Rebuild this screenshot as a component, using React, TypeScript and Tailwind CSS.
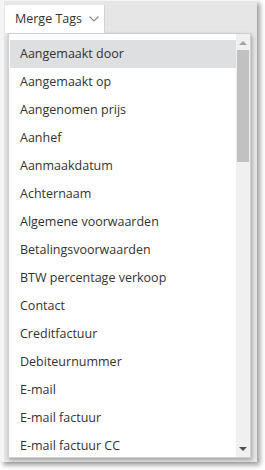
const TAGS = [
  'Aangemaakt door',
  'Aangemaakt op',
  'Aangenomen prijs',
  'Aanhef',
  'Aanmaakdatum',
  'Achternaam',
  'Algemene voorwaarden',
  'Betalingsvoorwaarden',
  'BTW percentage verkoop',
  'Contact',
  'Creditfactuur',
  'Debiteurnummer',
  'E-mail',
  'E-mail factuur',
  'E-mail factuur CC',
];

export default function App() {
  return (
    <div className="h-[470px] w-[265px] bg-white font-['Open_Sans','Noto_Sans',sans-serif] text-[12.5px] text-[#333]">
      <div className="h-[462px] w-[257px] border-l-4 border-t border-[#f4f4f4] bg-[#e6e6e6] shadow-[3px_3px_5px_rgba(0,0,0,0.4)]">
        {/* toolbar */}
        <div className="flex h-[32px] items-end">
          <div className="ml-[1px] flex h-[28px] w-[100px] items-center gap-[7px] border-r border-[#d4d4d4] bg-white pl-[10px]">
            <span>Merge Tags</span>
            <svg width="10" height="6" viewBox="0 0 10 6" fill="none" stroke="#888" strokeWidth="1.1">
              <path d="M0.5 0.5 L5 5 L9.5 0.5" />
            </svg>
          </div>
        </div>

        {/* dropdown */}
        <div className="ml-[4px] flex h-[425px] w-[243px] border border-[#cfcfcf] bg-white shadow-[1px_2px_4px_rgba(0,0,0,0.3)]">
          <div className="flex-1 overflow-hidden pl-[1px] pt-[6px]">
            {TAGS.map((t, i) => (
              <div
                key={t}
                className={`flex h-[28px] items-center whitespace-nowrap pl-[10px] ${i === 0 ? 'bg-[#dedfe1]' : ''}`}
              >
                {t}
              </div>
            ))}
          </div>
          <div className="flex w-[14px] flex-col items-center bg-[#f0f0f0]">
            <svg className="mt-[7px]" width="8" height="4" viewBox="0 0 8 4">
              <path d="M0 4 L4 0 L8 4 Z" fill="#a3a3a3" />
            </svg>
            <div className="mt-[5px] h-[112px] w-[12px] bg-[#c1c1c1]" />
            <div className="flex-1" />
            <svg className="mb-[6px]" width="8" height="4" viewBox="0 0 8 4">
              <path d="M0 0 L8 0 L4 4 Z" fill="#505050" />
            </svg>
          </div>
        </div>
      </div>
    </div>
  );
}
